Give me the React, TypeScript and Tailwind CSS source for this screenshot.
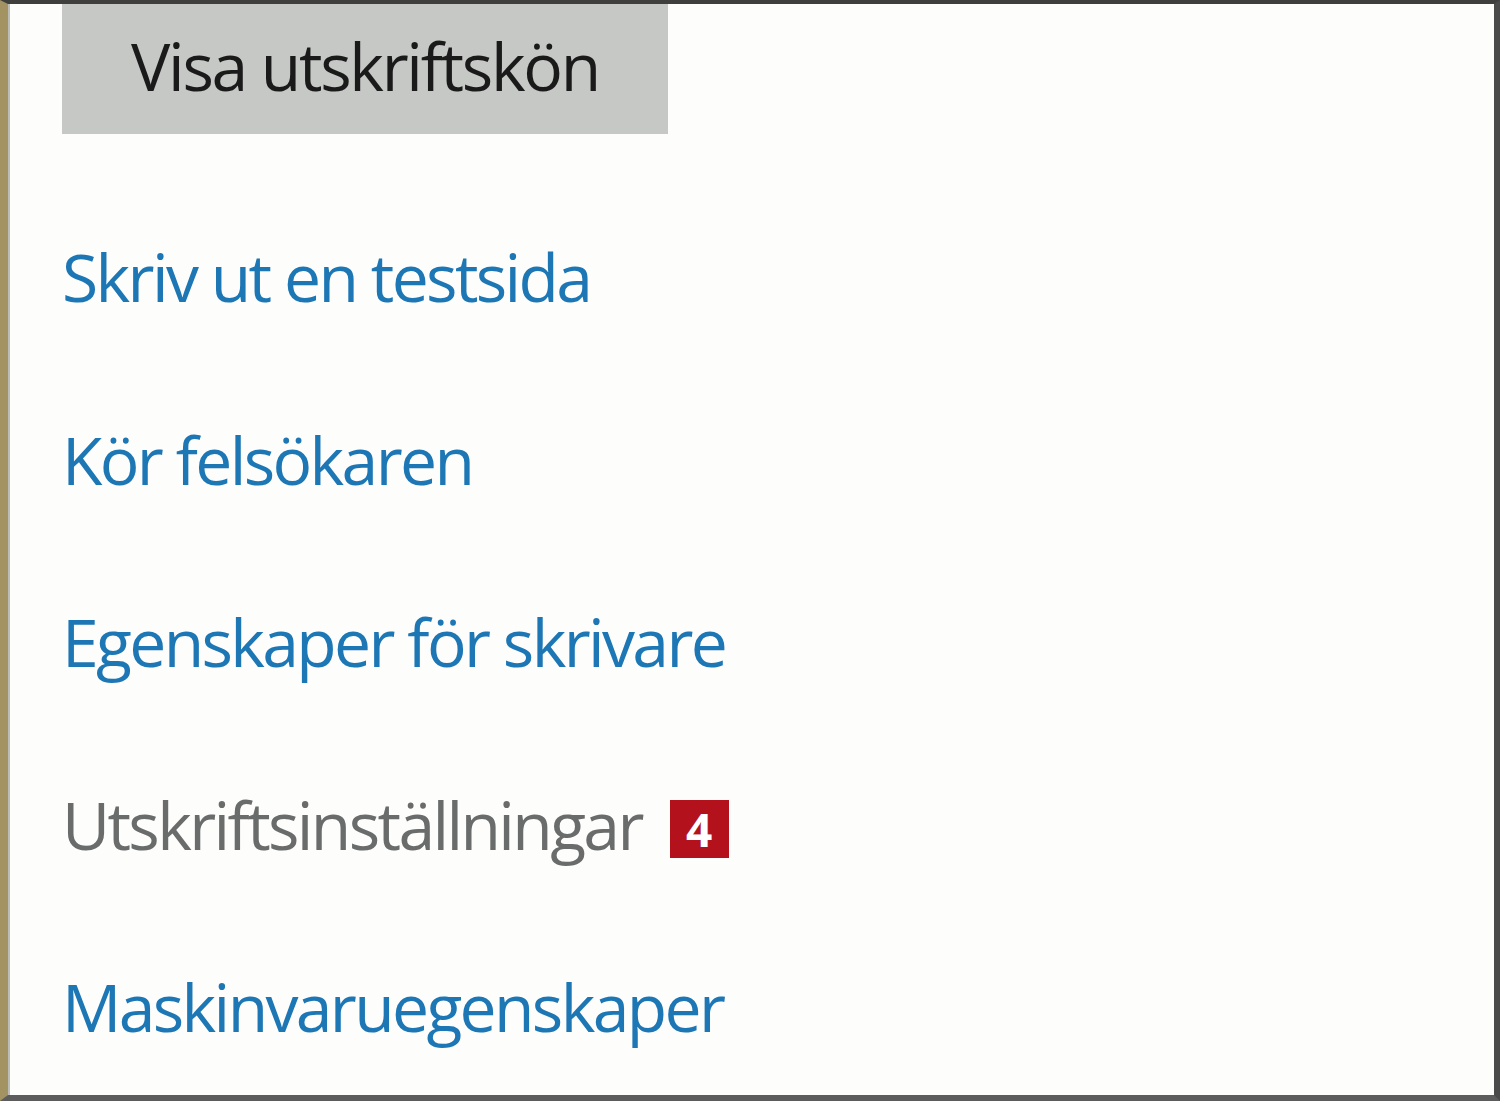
const links = [
  { label: 'Skriv ut en testsida', disabled: false },
  { label: 'Kör felsökaren', disabled: false },
  { label: 'Egenskaper för skrivare', disabled: false },
  { label: 'Utskriftsinställningar', disabled: true, badge: '4' },
  { label: 'Maskinvaruegenskaper', disabled: false },
];

export default function App() {
  return (
    <div className="h-[1101px] w-[1500px] overflow-hidden border-t-[4px] border-r-[6px] border-b-[6px] border-l-[8px] border-t-[#3f3f3d] border-r-[#4a4a4a] border-b-[#5c5c5c] border-l-[#a39262] bg-[#fdfdfc] font-['Open_Sans',sans-serif]">
      <div className="border-l-[2px] border-l-[#bdbdb8] pl-[52px]">
        <button className="flex h-[130px] w-[606px] items-center justify-center bg-[#c5c8c4] pb-[8px] text-[66px] tracking-[-0.035em] text-[#1a1a1a]">
          Visa utskriftskön
        </button>
        <ul className="mt-[51px]">
          {links.map((link) => (
            <li key={link.label} className="flex h-[182.5px] items-center gap-[28px] leading-[182px]">
              <span
                className={`text-[66px] tracking-[-0.04em] ${
                  link.disabled ? 'text-[#6a6c6b]' : 'text-[#1d77b5]'
                }`}
              >
                {link.label}
              </span>
              {link.badge ? (
                <span className="mt-[10px] flex h-[58px] w-[59px] items-center justify-center bg-[#b3121c] text-[46px] leading-none font-bold text-white">
                  {link.badge}
                </span>
              ) : null}
            </li>
          ))}
        </ul>
      </div>
    </div>
  );
}
